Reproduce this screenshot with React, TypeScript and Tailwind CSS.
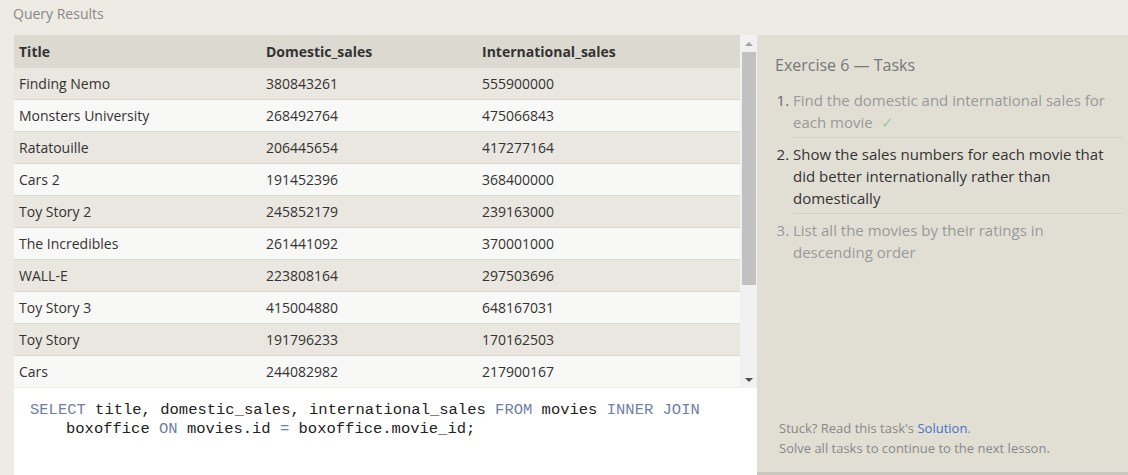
import React from 'react';

const rows: [string, string, string][] = [
  ['Finding Nemo', '380843261', '555900000'],
  ['Monsters University', '268492764', '475066843'],
  ['Ratatouille', '206445654', '417277164'],
  ['Cars 2', '191452396', '368400000'],
  ['Toy Story 2', '245852179', '239163000'],
  ['The Incredibles', '261441092', '370001000'],
  ['WALL-E', '223808164', '297503696'],
  ['Toy Story 3', '415004880', '648167031'],
  ['Toy Story', '191796233', '170162503'],
  ['Cars', '244082982', '217900167']
];

const sans = { fontFamily: '"Open Sans", "Noto Sans", sans-serif' };

const App: React.FC = () => {
  return (
    <div
      className="w-[1128px] h-[475px] bg-[#eeebe5] overflow-hidden flex flex-col text-[#333]"
      style={sans}
    >
      <div className="h-[35px] pl-[13px] pt-[4px] text-[14px] text-[#888] leading-[20px]">
        Query Results
      </div>
      <div className="flex flex-1 ml-[14px] min-h-0">
        {/* left column: results + editor */}
        <div className="w-[743px] flex flex-col">
          <div className="flex h-[353px]">
            <div className="w-[726px] text-[14px]">
              <div className="flex h-[32px] items-center bg-[#dcdad0] font-bold">
                <div className="w-[247px] pl-[5px]">Title</div>
                <div className="w-[216px] pl-[5px]">Domestic_sales</div>
                <div className="flex-1 pl-[5px]">International_sales</div>
              </div>
              {rows.map((r, i) => (
                <div
                  key={r[0]}
                  className={
                    'flex h-[32px] items-center border-t border-[#dcdad3] ' +
                    (i % 2 === 0 ? 'bg-[#e9e7df]' : 'bg-[#f8f8f6]')
                  }
                >
                  <div className="w-[247px] pl-[5px]">{r[0]}</div>
                  <div className="w-[216px] pl-[5px]">{r[1]}</div>
                  <div className="flex-1 pl-[5px]">{r[2]}</div>
                </div>
              ))}
            </div>
            {/* scrollbar */}
            <div className="w-[17px] bg-[#f1f1f1] flex flex-col items-center">
              <div className="h-[17px] flex items-center justify-center">
                <div className="w-0 h-0 border-l-[4px] border-r-[4px] border-b-[4px] border-l-transparent border-r-transparent border-b-[#a3a3a3]" />
              </div>
              <div className="w-[14px] h-[233px] bg-[#c1c1c1]" />
              <div className="flex-1" />
              <div className="h-[17px] flex items-center justify-center">
                <div className="w-0 h-0 border-l-[4px] border-r-[4px] border-t-[4px] border-l-transparent border-r-transparent border-t-[#505050]" />
              </div>
            </div>
          </div>
          <div
            className="flex-1 bg-white pl-[16px] pt-[13px] text-[15.5px] leading-[19px] text-[#222]"
            style={{ fontFamily: '"Liberation Mono", monospace' }}
          >
            <div>
              <span className="text-[#6e7fa8]">SELECT</span> title, domestic_sales, international_sales{' '}
              <span className="text-[#6e7fa8]">FROM</span> movies{' '}
              <span className="text-[#6e7fa8]">INNER JOIN</span>
            </div>
            <div className="pl-[36px]">
              boxoffice <span className="text-[#6e7fa8]">ON</span> movies.id{' '}
              <span className="text-[#6e7fa8]">=</span> boxoffice.movie_id;
            </div>
          </div>
        </div>
        {/* right panel: tasks */}
        <div className="flex-1 flex flex-col">
          <div className="flex-1 bg-[#e1dfd4] flex flex-col pl-[18px] pr-[6px] pt-[20px] pb-[14px]">
            <div className="text-[16px] text-[#777] leading-[20px]">Exercise 6 — Tasks</div>
            <ol className="list-decimal pl-[18px] mt-[9px] text-[15px] leading-[22px]">
              <li className="pt-[5px] pb-[4px] border-b border-[#d3d1c6] text-[#999] marker:text-[#666]">
                Find the domestic and international sales for each movie
                <span className="ml-[8px] text-[#9ccc9c]">✓</span>
              </li>
              <li className="pt-[5px] pb-[4px] border-b border-[#d3d1c6] text-[#333]">
                Show the sales numbers for each movie that did better internationally rather than
                domestically
              </li>
              <li className="pt-[5px] pb-[4px] text-[#999]">
                List all the movies by their ratings in descending order
              </li>
            </ol>
            <div className="mt-auto pl-[4px] text-[13px] leading-[20px] text-[#888]">
              <div>
                Stuck? Read this task's <span className="text-[#4a6fc4]">Solution</span>.
              </div>
              <div>Solve all tasks to continue to the next lesson.</div>
            </div>
          </div>
          <div className="h-[3px] bg-[#c9c7c0]" />
        </div>
      </div>
    </div>
  );
};

export default App;
